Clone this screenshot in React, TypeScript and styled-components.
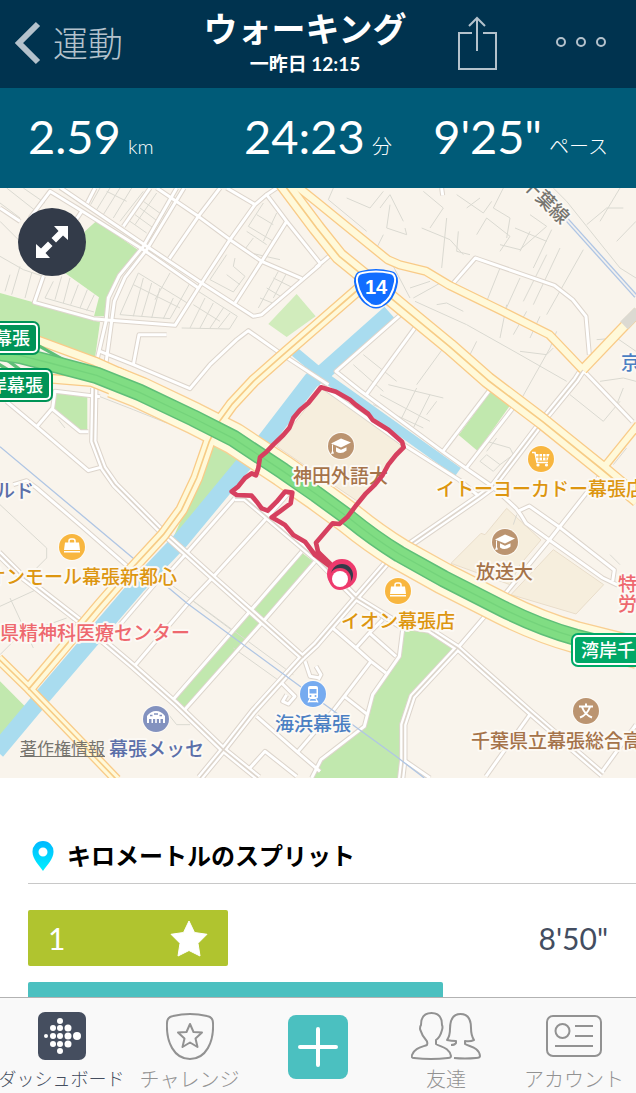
import React from "react";
import styled, { createGlobalStyle } from "styled-components";

const GlobalStyle = createGlobalStyle`
  *, *::before, *::after { box-sizing: border-box; }
  html, body { margin: 0; padding: 0; }
  body {
    background: #fff;
    font-family: Lato, "Noto Sans CJK JP", sans-serif;
    color: #000;
  }
  button { font: inherit; border: 0; padding: 0; background: none; cursor: pointer; }
`;

const Screen = styled.div`
  display: flex;
  flex-direction: column;
  height: 100vh;
  overflow: hidden;
`;

const Header = styled.header`
  flex: none;
  display: grid;
  grid-template-columns: 190px 1fr 216px;
  align-items: center;
  height: 88px;
  background: #00334f;
  color: #b4c2cc;
`;

const BackButton = styled.button`
  display: flex;
  align-items: center;
  gap: 12px;
  padding: 0 0 2px 14px;
  color: inherit;
  font-size: 35px;
  font-weight: 300;
  line-height: 48px;
`;

const TitleBlock = styled.div`
  display: flex;
  flex-direction: column;
  align-items: center;
  padding-bottom: 4px;
  color: #fff;
  white-space: nowrap;
`;

const Title = styled.h1`
  margin: 0;
  font-size: 34px;
  font-weight: 700;
  line-height: 44px;
`;

const Subtitle = styled.p`
  margin: 0;
  font-size: 19px;
  font-weight: 700;
  line-height: 26px;
`;

const Actions = styled.div`
  display: flex;
  align-items: center;
  justify-content: space-between;
  padding: 0 28px 2px 36px;
`;

const IconButton = styled.button`
  display: flex;
  color: inherit;
`;

const Stats = styled.dl`
  flex: none;
  display: grid;
  grid-template-columns: 1fr auto 1fr;
  align-items: center;
  height: 100px;
  margin: 0;
  padding: 0 28px 4px;
  background: #005b78;
  color: #fff;
`;

const Stat = styled.div<{ $end?: boolean }>`
  display: flex;
  flex-direction: row-reverse;
  align-items: baseline;
  gap: 7px;
  justify-self: ${(p) => (p.$end ? "end" : "start")};
  white-space: nowrap;
`;

const StatValue = styled.dd`
  margin: 0;
  font-size: 47px;
  line-height: 60px;
`;

const StatUnit = styled.dt`
  font-size: 20px;
  font-weight: 300;
`;

const Content = styled.main`
  flex: 1;
  min-height: 0;
  overflow: hidden;
`;

const MapPanel = styled.section`
  position: relative;
  height: 590px;
  overflow: hidden;
  background: #f9f4ec;
`;

const MapCanvas = styled.svg`
  display: block;
  width: 100%;
  height: 100%;
`;

const MapText = styled.text`
  font-family: "Noto Sans CJK JP", sans-serif;
  font-size: 19px;
  font-weight: 500;
  stroke: #fcf9f4;
  stroke-width: 4px;
  stroke-linejoin: round;
  paint-order: stroke;
`;

const SignText = styled.text`
  font-family: "Noto Sans CJK JP", sans-serif;
  font-size: 18px;
  font-weight: 500;
  fill: #fff;
`;

const ExpandButton = styled.button`
  position: absolute;
  top: 20px;
  left: 18px;
  display: flex;
  align-items: center;
  justify-content: center;
  width: 68px;
  height: 68px;
  border-radius: 50%;
  background: #333b49;
`;

const LegalLink = styled.a`
  position: absolute;
  left: 20px;
  bottom: 18px;
  color: #77756f;
  font-size: 17px;
  line-height: 22px;
`;

const Splits = styled.section`
  padding: 50px 0 0 28px;
`;

const SplitsHeading = styled.h2`
  display: flex;
  align-items: center;
  gap: 13px;
  height: 56px;
  margin: 0;
  padding: 0 0 3px 4px;
  border-bottom: 1px solid #c8c8c8;
  font-size: 24px;
  font-weight: 700;
`;

const PinIcon = styled.svg`
  margin-top: 4px;
`;

const SplitList = styled.ol`
  display: flex;
  flex-direction: column;
  gap: 16px;
  margin: 0;
  padding: 26px 28px 0 0;
  list-style: none;
`;

const SplitRow = styled.li`
  display: flex;
  align-items: center;
  justify-content: space-between;
  height: 56px;
  color: #434d60;
  font-size: 30px;
`;

const SplitBar = styled.div<{ $color: string }>`
  display: flex;
  align-items: center;
  justify-content: space-between;
  height: 100%;
  padding: 0 20px;
  border-radius: 2px;
  background: ${(p) => p.$color};
  color: #fff;
`;

const TabBar = styled.nav`
  flex: none;
  display: grid;
  grid-template-columns: 123fr 133fr 124fr 132fr 124fr;
  height: 96px;
  border-top: 1px solid #b2b2b2;
  background: #f9f9f9;
`;

const Tab = styled.button<{ $active?: boolean; $compact?: boolean }>`
  display: flex;
  flex-direction: column;
  align-items: center;
  gap: 4px;
  min-width: 0;
  padding-top: 14px;
  color: ${(p) => (p.$active ? "#454e5f" : "#929292")};
  font-size: ${(p) => (p.$compact ? 18 : 20)}px;
  font-weight: 300;
  line-height: 30px;
  white-space: nowrap;
`;

const AddButton = styled.button`
  display: flex;
  align-items: center;
  justify-content: center;
  justify-self: center;
  width: 60px;
  height: 64px;
  margin-top: 17px;
  border-radius: 8px;
  background: #4bc0c0;
`;

/* Map geometry is drawn on a grid of three units to the pixel. */

const parks = [
  "290,98 415,187 355,262 325,330 318,385 282,385 297,328 195,255 255,130",
  "0,315 100,343 300,403 285,510 120,455 0,400",
  "168,613 262,626 262,729 240,729 160,666",
  "652,754 738,808 520,1048 555,970",
  "1475,606 1531,651 1433,789 1376,741",
  "0,1480 85,1565 0,1665",
  "908,1096 942,1122 550,1563 520,1540",
  "1211,1320 1278,1325 1360,1380 1238,1520 1206,1610 1198,1770 935,1770 963,1715 1088,1620 1118,1520 1198,1405",
];

const campuses = [
  "965,600 1205,770 1080,945 830,775",
  "1353,1126 1443,1036 1455,1040 1520,961 1623,1056 1560,1130 1530,1190",
  "1660,1085 1811,1190 1728,1278 1533,1220",
];

const lanes = `
M0,100 75,175 M20,0 115,75 M70,0 135,45 M0,45 60,90 M30,260 15,310 M60,235 35,320 M95,255 75,330 M0,205 70,245 130,265
M160,280 135,330 282,372 M185,265 165,335 M210,270 190,345 M235,290 212,350 M262,305 240,360 M283,320 260,368
M300,0 272,50 M330,0 290,65 M360,0 310,80 M395,0 340,90 M430,10 360,100 M320,10 380,40
M430,40 500,90 M420,60 480,105 M405,80 460,120 M390,100 440,135 M470,15 405,110
M415,255 360,380 510,392 570,285 M415,255 570,350 M400,290 540,360 M430,270 400,385 M455,285 425,385 M480,300 455,390 M510,255 465,335 M520,330 490,392
M595,310 712,385 688,423 545,420 M615,330 570,420 M640,345 600,420 M670,360 630,420 M690,375 655,420 M580,350 660,400
M680,200 630,275 700,312 735,265 700,235 705,210 M680,260 720,290
M790,45 745,115 820,160 M770,80 820,110 M740,130 800,170 M760,150 730,190 840,215 M830,75 790,160
M835,250 775,360 M820,270 880,300 M800,300 850,330 M780,330 830,350 M860,255 820,330
M1000,0 985,35 1100,130 M1040,30 1110,60 1150,10 M1140,60 1170,20 1210,100 M1150,140 1130,180 M1170,50 1160,120 1220,140 1215,120
M990,90 1180,235 1230,330 M1270,10 1330,60 1290,120 M1265,120 1350,155 1390,200 M1340,90 1325,240 M1375,130 1370,190 1410,200 M1370,20 1450,75 1475,40 M1400,60 1440,30
M1430,140 1460,90 1530,145 1500,190 M1510,0 1480,60 1530,90 1520,150 M1545,120 1640,160 M1590,80 1640,115 1560,185 1500,170 M1590,130 1560,190 M1655,125 1600,240
M1680,180 1600,350 M1640,200 1570,340 M1750,185 1640,380 M1500,240 1460,340 M1560,270 1510,380 M1660,0 1700,40 1860,240 M1760,110 1820,60 1870,60 M1860,240 1908,270 M1860,0 1800,100 M1908,100 1850,160
M1245,340 1400,410 1560,500 1700,580 M1310,350 1340,345 1390,370 M1230,300 1290,280 M1240,330 1330,280 M1580,370 1540,440 M1620,385 1590,450 M1520,350 1500,450 M1670,430 1650,480
M1560,490 1640,500 1660,480 M1430,460 1400,520 M1330,480 1250,590 M1790,455 1850,450 1908,490 M1800,580 1870,570 1908,580 M1710,620 1810,700 1860,640 M1650,480 1560,640
M1090,500 1190,580 M1060,530 1150,610 M1165,590 1330,630 M1140,620 1290,700 M1120,650 1270,720 M1250,600 1200,700 M1290,620 1240,720 M1310,640 1280,680
M1460,760 1530,780 1540,800 1500,830 M1490,750 1460,790 M1460,800 1500,830 1480,850 1440,820 1460,800
M300,626 400,665 500,705 515,690 M175,695 195,720 M0,950 140,1080 140,1110 110,1140 M120,1200 0,1255 M30,1230 100,1380 M0,1400 60,1340 200,1290
M500,1180 880,1460 M580,1240 700,1330 M700,1380 840,1480 M490,1560 530,1610 570,1610 M1830,1100 1860,1130 M1870,600 1850,650 M1880,780 1840,830 M1550,980 1540,1010`;

const minorRoads = [
  "0,60 60,100",
  "90,90 150,10 240,65 430,185 595,300",
  "180,-2 440,175 605,285 760,385 785,380 960,230",
  "245,70 205,130",
  "285,0 262,45",
  "450,0 370,115",
  "530,0 430,175 358,262 325,330 318,400 290,520",
  "552,0 440,185 375,268 343,340 318,525",
  "470,0 595,85 690,155 785,220 905,272",
  "660,0 595,85 508,212",
  "800,20 765,50 690,155 605,285 525,412 330,397 280,392 103,343 130,265",
  "680,0 765,50",
  "830,0 800,20 860,100 960,225",
  "860,100 785,220 705,345",
  "300,490 400,530 570,602 630,530 710,455 745,428 840,495 985,590",
  "400,530 417,440 500,440",
  "948,238 993,200",
  "1325,0 1328,22",
  "1356,290 1426,210 1663,292 1718,335 1758,385 1768,500",
  "1213,370 1008,550 1078,606 1328,791 1398,841 1478,896 1548,961 1563,981 1578,1006 1648,1056 1808,1170 1850,1190 1908,1190",
  "1248,415 1098,621",
  "1748,545 1778,576 1898,701",
  "1473,601 1328,791",
  "1538,661 1398,841",
  "960,590 1213,771 1378,876 1438,926",
  "1798,866 1648,1056 1513,1220 1463,1275 1373,1380",
  "1558,968 1588,954 1683,1021 1843,1146 1838,1180",
  "20,641 110,716 265,848 310,836",
  "110,716 158,660 165,610 300,626",
  "158,664 240,731 265,731",
  "862,920 800,990 640,1166 560,1250 400,1438",
  "515,1145 560,1095 705,930",
  "40,890 80,878 110,900 245,1015 400,1150",
  "905,1091 840,1166 750,1270 515,1540",
  "945,1121 790,1300 550,1570",
  "480,1170 360,1310",
  "770,1585 895,1695 960,1750",
  "845,1485 885,1525 865,1548 848,1540 860,1520",
  "915,1420 930,1465 960,1470",
  "745,1745 795,1690 890,1765",
  "998,1320 1068,1380 1113,1420 1158,1455",
  "1068,1380 1108,1335 1188,1405",
  "1108,1335 1148,1295",
  "1113,1420 1033,1525 998,1570 890,1695",
  "1033,1525 1103,1580",
  "948,1435 963,1460 955,1475",
  "1208,1325 1198,1405 1118,1520 1093,1615 963,1715 935,1770",
  "1593,1575 1458,1765",
  "1908,1610 1803,1755",
  "1210,1715 1290,1770",
];

const doubleRoads = [
  "1748,545 1728,576 1638,686 1478,896 1438,926 1228,1071 1163,1121 1068,1230 948,1370 905,1410 760,1570 670,1685 600,1770",
  "283,600 280,760 310,840 345,890 490,1035 640,1170 770,1285 910,1410",
  "-5,1096 60,1160 240,1300 400,1435 530,1550 670,1685 775,1770",
  "705,930 735,930 800,985 960,1121 1068,1230 1198,1310 1288,1325 1373,1380 1593,1575 1808,1760",
  "1373,1380 1238,1525 1210,1610 1210,1715 1203,1775",
];

const mainRoads = [
  { width: 20, points: "885,-10 948,40 1163,215 1198,230 1278,250 1348,292 1508,370 1648,440 1748,545" },
  { width: 24, points: "1748,545 1915,370" },
  { width: 18, points: "1915,710 1818,830" },
  { width: 22, points: "100,452 285,520 430,585" },
  { width: 22, points: "100,568 275,582 430,645" },
  { width: 30, split: true, points: "1080,300 850,500 760,580 695,650 655,705 628,760 590,870 545,965 490,1040 370,1170 300,1250 85,1505" },
  { width: 24, split: true, points: "-5,1412 85,1500 350,1775" },
  { width: 42, split: true, points: "845,-20 950,120 1018,205 1178,335 1348,475 1463,576 1628,701 1808,846 1915,935" },
];

const highway =
  "M-10,492 L60,502 L150,525 L290,562 L420,614 L580,690 L700,751 L850,850 L948,918 L1048,991 Q1120,1050 1198,1098 L1331,1172 L1508,1262 Q1620,1318 1728,1348 L1915,1395";

const shoulder =
  "M340,582 L420,614 L580,690 L700,751 L850,850 L948,918 L1048,991 Q1120,1050 1198,1098 L1331,1172 L1508,1262 Q1620,1318 1728,1348 L1915,1395";

const route =
  "1010,1150 988,1131 955,1095 948,1064 973,1035 998,1006 1018,1008 1043,986 1070,950 1098,916 1125,890 1148,861 1165,830 1188,801 1211,778 1206,761 1165,725 1118,696 1105,678 1068,651 1050,635 1008,611 963,598 945,620 925,645 900,666 880,690 868,720 850,741 820,770 800,791 780,808 775,840 768,862 755,856 735,870 715,895 695,911 710,921 755,923 770,941 785,961 803,968 830,941 855,911 877,914 872,946 840,970 815,988 840,1002 855,1011 880,1041 915,1061 945,1101 1010,1150";

type Poi = {
  x: number;
  y: number;
  color: string;
  textColor: string;
  label: string;
  labelX: number;
  kind: "school" | "cart" | "bag" | "hall" | "train" | "bun";
};

const BROWN = "#bb9470";
const BROWN_TEXT = "#a5734a";
const AMBER = "#f8b63f";
const AMBER_TEXT = "#dd9610";

const pois: Poi[] = [
  { x: 341, y: 258, color: BROWN, textColor: BROWN_TEXT, label: "神田外語大", labelX: 293, kind: "school" },
  { x: 541, y: 271, color: AMBER, textColor: AMBER_TEXT, label: "イトーヨーカドー幕張店", labelX: 436, kind: "cart" },
  { x: 505, y: 354, color: BROWN, textColor: BROWN_TEXT, label: "放送大", labelX: 476, kind: "school" },
  { x: 398, y: 403, color: AMBER, textColor: AMBER_TEXT, label: "イオン幕張店", labelX: 341, kind: "bag" },
  { x: 72, y: 359, color: AMBER, textColor: AMBER_TEXT, label: "オンモール幕張新都心", labelX: -13, kind: "bag" },
  { x: 156, y: 531, color: "#8392bf", textColor: "#5b6fa9", label: "幕張メッセ", labelX: 109, kind: "hall" },
  { x: 313, y: 506, color: "#76abf0", textColor: "#4b7fc3", label: "海浜幕張", labelX: 275, kind: "train" },
  { x: 586, y: 523, color: BROWN, textColor: BROWN_TEXT, label: "千葉県立幕張総合高", labelX: 471, kind: "bun" },
];

function PoiGlyph({ kind }: { kind: Poi["kind"] }) {
  switch (kind) {
    case "school":
      return (
        <g fill="#fff">
          <path d="M-10-2.5 0-7.5 10-3.5 0 1.5Z" />
          <path d="M-5 1.2 0 3.8 5.5 1.2V4.5Q0 9-5 5.5Z" />
          <path d="M-9-2V5l-1 3 3-.5-1-2.5V-1Z" />
        </g>
      );
    case "cart":
      return (
        <g>
          <path d="M-9-6.5H-6L-4 3.5H7" fill="none" stroke="#fff" strokeWidth="1.5" />
          <path d="M-5.5-5H8.5L6.5 1.5H-4.2Z" fill="#fff" />
          <path d="M-2-5V1.5M1.5-5V1.5M5-5V1.5M-5-2H8" stroke={AMBER} strokeWidth="1" />
          <circle cx="-3" cy="6" r="1.6" fill="#fff" />
          <circle cx="5.5" cy="6" r="1.6" fill="#fff" />
        </g>
      );
    case "bag":
      return (
        <g>
          <path d="M-3-4V-6Q-3-8-1-8H1Q3-8 3-6V-4" fill="none" stroke="#fff" strokeWidth="1.5" />
          <path d="M-7-4.500H7L8 3H-8ZM-8 4H8V5.500H-8Z" fill="#fff" />
        </g>
      );
    case "hall":
      return (
        <g>
          <path d="M-9 4V-3Q-5-8 0-8T9-3V4H7V0H4.5V4H3V0H.8V4H-.8V0H-3V4H-4.5V0H-7V4Z" fill="#fff" />
          <path d="M-6-3.5H-3.5M-2-5H2M3.5-3.5H6" stroke="#8392bf" strokeWidth="1.5" />
        </g>
      );
    case "train":
      return (
        <g>
          <path d="M-3-8H3Q5-8 5-6V3Q5 5 0 5T-5 3V-6Q-5-8-3-8Z" fill="#fff" />
          <path d="M-3.5-5H3.5V-.5H-3.5Z" fill="#76abf0" />
          <path d="M-3 5-5 8.500M3 5 5 8.500M-4 7.500H4" stroke="#fff" strokeWidth="1.3" />
          <circle cx="-2.5" cy="2" r="1" fill="#76abf0" />
          <circle cx="2.5" cy="2" r="1" fill="#76abf0" />
        </g>
      );
    default:
      return (
        <path
          d="M-7-4.500H7M0-7.500V-4.500M-4-4Q-1 4 6 6.500M4-4Q1 4-6 6.500"
          fill="none"
          stroke="#fff"
          strokeWidth="2"
        />
      );
  }
}

function RoadSign({ x, y, width, color, label, textX }: { x: number; y: number; width: number; color: string; label: string; textX: number }) {
  return (
    <g>
      <rect x={x} y={y} width={width} height="34" rx="7" fill={color} />
      <rect x={x + 3} y={y + 3} width={width - 6} height="28" rx="4" fill="none" stroke="#fff" strokeWidth="2" />
      <SignText x={textX} y={y + 24}>
        {label}
      </SignText>
    </g>
  );
}

function RouteMap() {
  return (
    <MapCanvas viewBox="0 0 636 590" preserveAspectRatio="xMidYMid slice" role="img" aria-label="ウォーキングのルート">
      <g transform="scale(0.33333)" fill="none" strokeLinejoin="round">
        {campuses.map((p) => (
          <polygon key={p} points={p} fill="#f6eedd" stroke="#e9ddca" strokeWidth="3" />
        ))}
        {parks.map((p) => (
          <polygon key={p} points={p} fill="#c1e8ae" />
        ))}
        <polygon points="805,408 890,318 947,385 860,447" fill="#d1ecbc" />
        <path d={lanes} stroke="#dad9d1" strokeWidth="3" />
        <polyline points="1170,375 960,562 935,576 790,765 725,836 543,1056 415,1190 120,1535 -10,1690" stroke="#a9dcef" strokeWidth="50" />
        <polyline points="885,492 985,575 1374,852" stroke="#a9dcef" strokeWidth="29" />
        {minorRoads.map((p) => (
          <polyline key={p} points={p} stroke="#ddd5cc" strokeWidth="15" />
        ))}
        {doubleRoads.map((p) => (
          <polyline key={p} points={p} stroke="#ddd5cc" strokeWidth="25" />
        ))}
        {minorRoads.map((p) => (
          <polyline key={p} points={p} stroke="#fff" strokeWidth="9" />
        ))}
        {doubleRoads.map((p) => (
          <polyline key={p} points={p} stroke="#fff" strokeWidth="19" />
        ))}
        {doubleRoads.map((p) => (
          <polyline key={p} points={p} stroke="#ddd5cc" strokeWidth="5" />
        ))}
        <polyline points="0,776 430,1136 560,1245 900,1495 968,1545 1188,1705 1273,1770" stroke="#b0c6e4" strokeWidth="4" />
        <polyline points="1698,92 1908,325" stroke="#b0c6e4" strokeWidth="13" />
        <polyline points="1698,92 1908,325" stroke="#f3f1ee" strokeWidth="5" />
        <path d={shoulder} stroke="#f9cf92" strokeWidth="98" />
        {mainRoads.map((r) => (
          <polyline key={r.points} points={r.points} stroke="#f9cb88" strokeWidth={r.width + 8} />
        ))}
        <path d={shoulder} stroke="#fffadd" strokeWidth="90" />
        {mainRoads.map((r) => (
          <polyline key={r.points} points={r.points} stroke="#fff9d9" strokeWidth={r.width} />
        ))}
        {mainRoads
          .filter((r) => r.split)
          .map((r) => (
            <polyline key={r.points} points={r.points} stroke="#f7cc86" strokeWidth="5" />
          ))}
        <polyline points="1872,412 1915,370" stroke="#dcdad2" strokeWidth="32" />
        <path d={highway} stroke="#5fbf78" strokeWidth="52" />
        <path d="M-10,525 40,555 M0,500 60,545 180,545 M110,470 190,515" stroke="#5fbf78" strokeWidth="10" />
        <path d={highway} stroke="#80dd83" strokeWidth="43" />
        <path d={highway} stroke="#74d37b" strokeWidth="4" />
      </g>
      {pois.map((p) => (
        <g key={p.label}>
          <g transform={`translate(${p.x} ${p.y})`}>
            <circle r="14" fill="#fdfaf5" />
            <circle r="13" fill={p.color} />
            <PoiGlyph kind={p.kind} />
          </g>
          <MapText x={p.labelX} y={p.y + 37} fill={p.textColor}>
            {p.label}
          </MapText>
        </g>
      ))}
      <MapText x="0" y="452" fill="#ee686e">県精神科医療センター</MapText>
      <MapText x="-4" y="310" fill="#5b6fa9">ルド</MapText>
      <MapText x="618" y="403" fill="#ee686e">特</MapText>
      <MapText x="618" y="423" fill="#ee686e">労</MapText>
      <MapText x="621" y="182" fill="#4b7fc3">京</MapText>
      <MapText x="521" y="-3" fill="#77756f" transform="rotate(45 521 -3)">千葉線</MapText>
      <g transform="scale(0.33333)">
        <polyline points={route} fill="none" stroke="#d6405f" strokeWidth="14" strokeLinejoin="round" />
        <path d="M948,1090 1010,1150" stroke="#d6405f" strokeWidth="20" />
      </g>
      <circle cx="342" cy="386" r="15" fill="#ee3a6d" />
      <circle cx="342" cy="387" r="11" fill="#333b49" />
      <circle cx="340" cy="391" r="11" fill="#ee3a6d" />
      <circle cx="340" cy="391" r="8" fill="#fff" />
      <RoadSign x={-20} y={133} width={60} color="#009457" label="幕張" textX={-6} />
      <RoadSign x={-20} y={180} width={73} color="#009457" label="岸幕張" textX={-11} />
      <RoadSign x={571} y={445} width={90} color="#00a867" label="湾岸千" textX={581} />
      <path d="M361 83Q376 79 391 83Q398 84 398 94Q395 113 382 119Q376 122 370 119Q357 113 354 94Q354 84 361 83Z" fill="#116dff" />
      <path d="M362 85Q376 82 390 85Q396 86 395 94Q392 111 381 117Q376 119 371 117Q360 111 357 94Q356 86 362 85Z" fill="none" stroke="#fff" strokeWidth="2" />
      <text x="376" y="106" fill="#fff" textAnchor="middle" fontFamily="Liberation Sans, sans-serif" fontSize="20" fontWeight="700">
        14
      </text>
    </MapCanvas>
  );
}

const trackerDots = [
  [8, 24, 2], [15, 16, 3], [15, 24, 3], [15, 32, 3], [22, 9, 3], [22, 16, 3], [22, 24, 3], [22, 32, 3], [22, 39, 3],
  [30, 16, 3.5], [30, 24, 3.5], [30, 32, 3.5], [39, 24, 4],
];

const splits = [
  { km: "1", share: 34.5, color: "#b0c42f", pace: "8'50\"", best: true },
  { km: "", share: 71.6, color: "#4bc0c0", pace: "", best: false },
];

export default function App() {
  return (
    <Screen>
      <GlobalStyle />
      <Header>
        <BackButton type="button">
          <svg width="27" height="44" viewBox="0 0 27 44" fill="none" stroke="currentColor" strokeWidth="6" aria-hidden="true">
            <path d="M24 3 5 22 24 41" />
          </svg>
          運動
        </BackButton>
        <TitleBlock>
          <Title>ウォーキング</Title>
          <Subtitle>一昨日 12:15</Subtitle>
        </TitleBlock>
        <Actions>
          <IconButton type="button" aria-label="共有">
            <svg width="42" height="54" viewBox="0 0 42 54" fill="none" stroke="currentColor" strokeWidth="2" aria-hidden="true">
              <path d="M16 17H3V53H40V17H27M21 35V2M13 10 21 2 29 10" />
            </svg>
          </IconButton>
          <IconButton type="button" aria-label="その他">
            <svg width="52" height="12" viewBox="0 0 52 12" fill="none" stroke="currentColor" strokeWidth="2" aria-hidden="true">
              <circle cx="5" cy="5" r="4" />
              <circle cx="25" cy="5" r="4" />
              <circle cx="45" cy="5" r="4" />
            </svg>
          </IconButton>
        </Actions>
      </Header>
      <Stats>
        <Stat>
          <StatUnit>km</StatUnit>
          <StatValue>2.59</StatValue>
        </Stat>
        <Stat>
          <StatUnit>分</StatUnit>
          <StatValue>24:23</StatValue>
        </Stat>
        <Stat $end>
          <StatUnit>ペース</StatUnit>
          <StatValue>9'25"</StatValue>
        </Stat>
      </Stats>
      <Content>
        <MapPanel>
          <RouteMap />
          <ExpandButton type="button" aria-label="地図を拡大">
            <svg width="34" height="34" viewBox="0 0 34 34" fill="#fff" aria-hidden="true">
              <path d="M19 1H33V15L28 10.500 21 17.500 16.500 13 23.500 6Z" />
              <path d="M1 19V33H15L10.500 28 17.500 21 13 16.500 6 23.500Z" />
            </svg>
          </ExpandButton>
          <LegalLink href="#legal">著作権情報</LegalLink>
        </MapPanel>
        <Splits>
          <SplitsHeading>
            <PinIcon width="22" height="30" viewBox="0 0 22 30" aria-hidden="true">
              <defs>
                <linearGradient id="pin" x1="0" y1="0" x2="0" y2="1">
                  <stop offset="0" stopColor="#00b8ff" />
                  <stop offset="1" stopColor="#00f0ff" />
                </linearGradient>
              </defs>
              <path
                d="M11 0A10.500 10.500 0 0 1 21.500 11C21.500 18 15 24 11 30C7 24 .5 18 .5 11A10.500 10.500 0 0 1 11 0ZM11 6.500A4.500 4.500 0 1 0 11 15.500A4.500 4.500 0 1 0 11 6.500Z"
                fill="url(#pin)"
                fillRule="evenodd"
              />
            </PinIcon>
            キロメートルのスプリット
          </SplitsHeading>
          <SplitList>
            {splits.map((s) => (
              <SplitRow key={s.color}>
                <SplitBar $color={s.color} style={{ width: `${s.share}%` }}>
                  {s.km}
                  {s.best && (
                    <svg width="38" height="37" viewBox="0 0 38 37" fill="#fff" stroke="#fff" strokeLinejoin="round" aria-hidden="true">
                      <path d="M19 1 24.500 12.500 37 14.300 28 23.300 30 36 19 30.500 8 36 10 23.300 1 14.300 13.500 12.500Z" />
                    </svg>
                  )}
                </SplitBar>
                {s.pace}
              </SplitRow>
            ))}
          </SplitList>
        </Splits>
      </Content>
      <TabBar>
        <Tab type="button" $active $compact>
          <svg width="48" height="48" viewBox="0 0 48 48" aria-hidden="true">
            <rect width="48" height="48" rx="7" fill="#454e5f" />
            {trackerDots.map(([x, y, r]) => (
              <circle key={`${x}-${y}`} cx={x} cy={y} r={r} fill="#fff" />
            ))}
          </svg>
          ダッシュボード
        </Tab>
        <Tab type="button">
          <svg width="48" height="48" viewBox="0 0 48 48" fill="none" stroke="currentColor" strokeWidth="2" strokeLinejoin="round" aria-hidden="true">
            <path d="M7 4Q24 0 41 4Q47 5 47 11C48 30 40 47 24 47S0 30 1 11Q1 5 7 4Z" />
            <path d="M24 12 27.500 20 36 20.500 29.500 26.500 31.500 35 24 30.500 16.500 35 18.500 26.500 12 20.500 20.500 20Z" />
          </svg>
          チャレンジ
        </Tab>
        <AddButton type="button" aria-label="追加">
          <svg width="40" height="40" viewBox="0 0 40 40" stroke="#fff" strokeWidth="4" strokeLinecap="round" aria-hidden="true">
            <path d="M20 2V38M2 20H38" />
          </svg>
        </AddButton>
        <Tab type="button">
          <svg width="70" height="48" viewBox="0 0 70 48" fill="none" stroke="currentColor" strokeWidth="2" strokeLinejoin="round" aria-hidden="true">
            <path d="M16 33C17 30 16 29 15 28C11 24 10 20 9 17Q9 14 10 13C10 5 14 1 20.500 1S31 5 31 13Q32 15 31 18C30 22 28 26 25 28V32C29 35 38 35 40 44Q40 46 37 46Q20 48 3 46Q0 46 1 43C3 36 11 35 16 33Z" />
            <path d="M40 33Q44 33 45 31V29Q40 29 36 28Q39 24 39 17C39 7 42 2 49.500 2S60 7 60 16C60 22 61 25 63 28Q59 30 54 29V32C59 35 68 35 69 44Q69 46 65 46Q54 47 43 46" />
          </svg>
          友達
        </Tab>
        <Tab type="button">
          <svg width="56" height="48" viewBox="0 0 56 48" fill="none" stroke="currentColor" strokeWidth="2" aria-hidden="true">
            <rect x="1" y="4" width="54" height="40" rx="6" />
            <circle cx="16.500" cy="19" r="7" />
            <path d="M29 14H47M29 24H47M9 34H47" />
          </svg>
          アカウント
        </Tab>
      </TabBar>
    </Screen>
  );
}
